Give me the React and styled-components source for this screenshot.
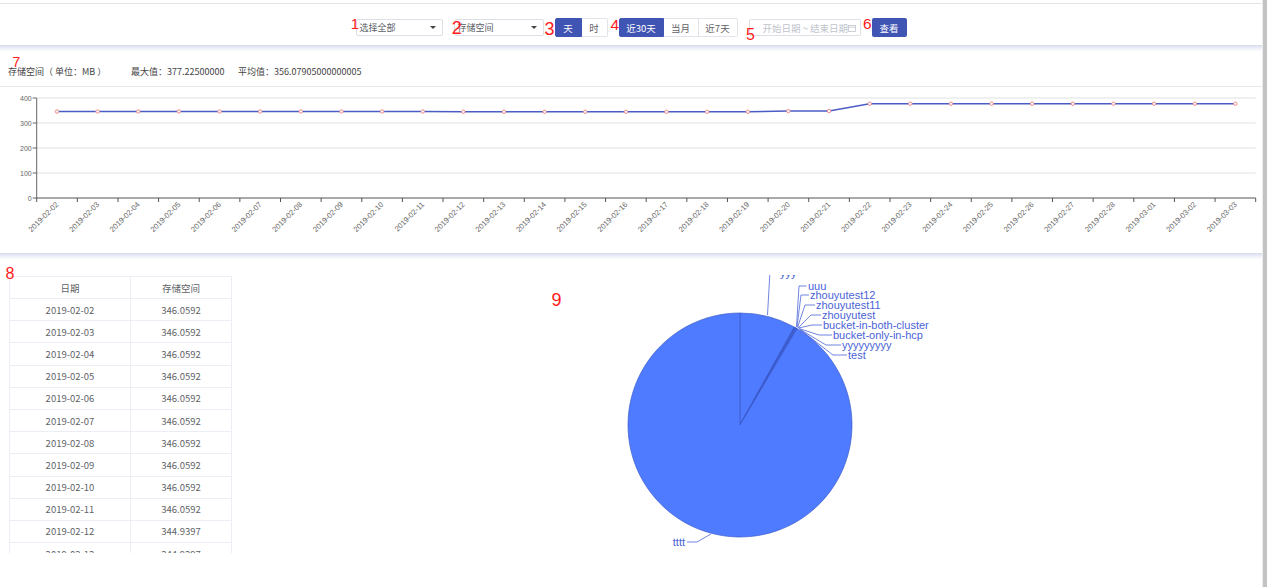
import React from "react";
import styled, { createGlobalStyle } from "styled-components";

const GlobalStyle = createGlobalStyle`
  html, body { margin: 0; padding: 0; background: #fff; overflow: hidden; }
  body { font-family: "Noto Sans CJK SC", "Noto Sans", sans-serif; }
  * { box-sizing: border-box; }
`;

const BLUE = "#4054b4";

const Page = styled.div`
  position: relative;
  display: flex;
  width: 1267px;
  height: 587px;
  overflow: hidden;
`;

const Main = styled.div`
  width: 1262px;
  display: flex;
  flex-direction: column;
`;

const Scrollbar = styled.div`
  width: 5px;
  height: 100%;
  background: #c3c3c3;
  border-left: 1px solid #ececec;
`;

const TopRule = styled.div`
  height: 4px;
  border-bottom: 1px solid #e4e4e4;
`;

const Toolbar = styled.div`
  height: 41px;
  padding-top: 14px;
  display: flex;
  align-items: flex-start;
  justify-content: center;
  gap: 11px;
`;

const Select = styled.div`
  width: ${(p) => p.$w}px;
  height: 17px;
  margin-top: 1px;
  border: 1px solid #dcdfe6;
  border-radius: 2px;
  background: #fff;
  display: flex;
  align-items: center;
  justify-content: space-between;
  padding: 0 6px 0 3px;
  font-size: 9px;
  color: #5a5e66;
`;

const Caret = styled.span`
  width: 0;
  height: 0;
  border-left: 3px solid transparent;
  border-right: 3px solid transparent;
  border-top: 3.5px solid #444;
`;

const SegGroup = styled.div`
  display: flex;
  height: 19px;
`;

const SegButton = styled.div`
  width: ${(p) => p.$w}px;
  height: 19px;
  display: flex;
  align-items: center;
  justify-content: center;
  font-size: 9.5px;
  background: ${(p) => (p.$active ? BLUE : "#fff")};
  color: ${(p) => (p.$active ? "#fff" : "#606266")};
  border: 1px solid ${(p) => (p.$active ? BLUE : "#e2e4ea")};
  border-left-width: ${(p) => (p.$first ? 1 : 0)}px;
  border-radius: ${(p) => (p.$first ? "2px 0 0 2px" : p.$last ? "0 2px 2px 0" : "0")};
`;

const DateRange = styled.div`
  position: relative;
  width: 112px;
  height: 17px;
  margin-top: 1px;
  border: 1px solid #dcdfe6;
  border-radius: 2px;
  padding-left: 13px;
  display: flex;
  align-items: center;
  font-size: 9.5px;
  color: #c0c4cc;
  white-space: nowrap;
  overflow: hidden;
`;

const CalIcon = styled.svg`
  position: absolute;
  right: 4px;
  top: 4px;
`;

const PrimaryButton = styled.div`
  width: 35px;
  height: 19px;
  background: ${BLUE};
  color: #fff;
  border-radius: 2px;
  font-size: 9.5px;
  display: flex;
  align-items: center;
  justify-content: center;
`;

const Shade = styled.div`
  height: 7px;
  background: linear-gradient(#d7dcec, #f3f5fb 60%, #fff);
`;

const ChartHeader = styled.div`
  height: 35px;
  border-bottom: 1px solid #e8e8e8;
  padding: 4px 0 0 8px;
  display: grid;
  grid-template-columns: 123px 107px auto;
  align-items: center;
  font-size: 9px;
  color: #444;
`;

const ChartSvg = styled.svg`
  display: block;
  width: 1262px;
  height: 166px;
`;

const Bottom = styled.div`
  display: flex;
  align-items: flex-start;
  flex: 1;
`;

const TableWrap = styled.div`
  margin: 16px 0 0 9px;
  width: 223px;
  height: 277px;
  overflow: hidden;
`;

const Table = styled.table`
  width: 222px;
  border-collapse: collapse;
  table-layout: fixed;
  font-size: 9.5px;
  color: #606266;
`;

const Th = styled.th`
  height: 22px;
  font-weight: normal;
  border: 1px solid #ebeef5;
  padding: 0;
  color: #606266;
  width: ${(p) => p.$w}px;
`;

const Td = styled.td`
  height: 22.2px;
  border: 1px solid #ebeef5;
  padding: 0;
  text-align: center;
`;

const PieSvg = styled.svg`
  display: block;
  margin: 15px 0 0 8px;
  width: 1022px;
  height: 312px;
`;

const Marker = styled.div`
  position: absolute;
  left: ${(p) => p.$x}px;
  top: ${(p) => p.$y}px;
  font-family: "Liberation Sans", Arial, sans-serif;
  font-size: ${(p) => p.$size}px;
  line-height: 1;
  color: #ff1a1a;
  pointer-events: none;
`;

/* ---------- data ---------- */
const dates = [];
for (let d = 2; d <= 28; d++) dates.push(`2019-02-${String(d).padStart(2, "0")}`);
for (let d = 1; d <= 3; d++) dates.push(`2019-03-0${d}`);
const values = dates.map((_, i) =>
  i < 10 ? 346.0592 : i < 18 ? 344.9397 : i < 20 ? 347.6 : 377.225
);

const tableRows = [
  ["2019-02-02", "346.0592"],
  ["2019-02-03", "346.0592"],
  ["2019-02-04", "346.0592"],
  ["2019-02-05", "346.0592"],
  ["2019-02-06", "346.0592"],
  ["2019-02-07", "346.0592"],
  ["2019-02-08", "346.0592"],
  ["2019-02-09", "346.0592"],
  ["2019-02-10", "346.0592"],
  ["2019-02-11", "346.0592"],
  ["2019-02-12", "344.9397"],
  ["2019-02-13", "344.9397"],
];

const AX0 = 36.7;
const AX1 = 1255.7;
const STEP = (AX1 - AX0) / 30;
const Y0 = 198;
const px = (i) => AX0 + STEP * (i + 0.5);
const py = (v) => Y0 - v * 0.25;

function LineChart() {
  const grid = [0, 100, 200, 300, 400];
  const linePts = values.map((v, i) => `${px(i).toFixed(1)},${py(v).toFixed(1)}`).join(" ");
  return (
    <ChartSvg viewBox="0 87 1262 166">
      {grid.map((g) => (
        <g key={g}>
          {g > 0 && (
            <line x1={AX0} x2={AX1} y1={Y0 - g * 0.25} y2={Y0 - g * 0.25} stroke="#ebebeb" strokeWidth="1.4" />
          )}
          <line x1={AX0 - 4} x2={AX0} y1={Y0 - g * 0.25} y2={Y0 - g * 0.25} stroke="#666" strokeWidth="1" />
          <text
            x={AX0 - 5}
            y={Y0 - g * 0.25 + 2.5}
            textAnchor="end"
            fontSize="7"
            fill="#666"
            fontFamily="Liberation Sans, Arial, sans-serif"
          >
            {g}
          </text>
        </g>
      ))}
      <line x1={AX0} x2={AX0} y1={98} y2={Y0} stroke="#666" strokeWidth="1" />
      <line x1={AX0} x2={AX1} y1={Y0} y2={Y0} stroke="#555" strokeWidth="1" />
      {Array.from({ length: 31 }).map((_, i) => (
        <line key={i} x1={AX0 + STEP * i} x2={AX0 + STEP * i} y1={Y0} y2={Y0 + 4} stroke="#555" strokeWidth="1" />
      ))}
      {dates.map((d, i) => (
        <text
          key={d}
          x={px(i) + 2}
          y={Y0 + 7}
          textAnchor="end"
          fontSize="7.6"
          fill="#666"
          fontFamily="Liberation Sans, Arial, sans-serif"
          transform={`rotate(-45 ${px(i) + 2} ${Y0 + 7})`}
        >
          {d}
        </text>
      ))}
      <polyline points={linePts} fill="none" stroke="#4a5dc6" strokeWidth="1.5" />
      {values.map((v, i) => (
        <circle key={i} cx={px(i)} cy={py(v)} r="1.7" fill="#fff" stroke="#ef8a8a" strokeWidth="1" />
      ))}
    </ChartSvg>
  );
}

const CX = 740;
const CY = 425;
const R = 112;
const pt = (deg) => {
  const a = (deg * Math.PI) / 180;
  return [CX + R * Math.sin(a), CY - R * Math.cos(a)];
};
const slicePath = (a0, a1) => {
  const [x0, y0] = pt(a0);
  const [x1, y1] = pt(a1);
  const large = a1 - a0 > 180 ? 1 : 0;
  return `M${CX},${CY} L${x0.toFixed(2)},${y0.toFixed(2)} A${R},${R} 0 ${large} 1 ${x1.toFixed(2)},${y1.toFixed(2)} Z`;
};

const slices = [
  [0, 29],
  [29, 29.2],
  [29.2, 29.4],
  [29.4, 29.6],
  [29.6, 29.8],
  [29.8, 30.0],
  [30.0, 30.2],
  [30.2, 30.4],
  [30.4, 30.6],
  [30.6, 360],
];

const labels = [
  { name: "yyy", pts: [[767.5, 315], [770, 271], [779, 271]], tx: 780, ly: 273.5 },
  { name: "uuu", pts: [[796.5, 327], [799, 286], [806.5, 286]], tx: 808, ly: 286 },
  { name: "zhouyutest12", pts: [[797, 327], [801, 295], [809, 295]], tx: 810, ly: 295 },
  { name: "zhouyutest11", pts: [[797.5, 327.5], [805, 305], [815, 305]], tx: 816, ly: 305 },
  { name: "zhouyutest", pts: [[798, 328], [811, 315], [821, 315]], tx: 822, ly: 315 },
  { name: "bucket-in-both-cluster", pts: [[798.5, 328], [812, 325], [822, 325]], tx: 823, ly: 325 },
  { name: "bucket-only-in-hcp", pts: [[799, 328.5], [819, 335], [832, 335]], tx: 833, ly: 335 },
  { name: "yyyyyyyyy", pts: [[799.5, 329], [826, 345], [841, 345]], tx: 842, ly: 345 },
  { name: "test", pts: [[800, 329.5], [833, 355], [847, 355]], tx: 848, ly: 355 },
];

function PieChart() {
  return (
    <PieSvg viewBox="240 275 1022 312">
      {slices.map(([a0, a1], i) => (
        <path key={i} d={slicePath(a0, a1)} fill="#4e7bff" stroke="#3d5ccb" strokeWidth="0.7" />
      ))}
      {labels.map((l) => (
        <g key={l.name}>
          <polyline points={l.pts.map((p) => p.join(",")).join(" ")} fill="none" stroke="#4d66d8" strokeWidth="0.8" />
          <text x={l.tx} y={l.ly + 3.5} fontSize="11" fill="#4a63d6" fontFamily="Liberation Sans, Arial, sans-serif">
            {l.name}
          </text>
        </g>
      ))}
      <polyline points="711,534 697,542 687,542" fill="none" stroke="#4d66d8" strokeWidth="0.8" />
      <text x="685" y="545.5" textAnchor="end" fontSize="11" fill="#4a63d6" fontFamily="Liberation Sans, Arial, sans-serif">
        tttt
      </text>
    </PieSvg>
  );
}

const markers = [
  { n: "1", x: 350.7, y: 16.3, s: 15 },
  { n: "2", x: 451.8, y: 19.3, s: 18 },
  { n: "3", x: 544.5, y: 20.3, s: 18 },
  { n: "4", x: 610.5, y: 17, s: 15.5 },
  { n: "5", x: 746, y: 27.2, s: 16 },
  { n: "6", x: 863, y: 16.3, s: 15.5 },
  { n: "7", x: 12.3, y: 54.9, s: 14.5 },
  { n: "8", x: 5.5, y: 265.6, s: 16 },
  { n: "9", x: 551.5, y: 290.7, s: 18 },
];

export default function App() {
  return (
    <>
      <GlobalStyle />
      <Page>
        <Main>
          <TopRule />
          <Toolbar>
            <Select $w={87}>
              <span>选择全部</span>
              <Caret />
            </Select>
            <Select $w={90}>
              <span>存储空间</span>
              <Caret />
            </Select>
            <SegGroup>
              <SegButton $w={27} $active $first>天</SegButton>
              <SegButton $w={26} $last>时</SegButton>
            </SegGroup>
            <SegGroup>
              <SegButton $w={45} $active $first>近30天</SegButton>
              <SegButton $w={35}>当月</SegButton>
              <SegButton $w={39} $last>近7天</SegButton>
            </SegGroup>
            <DateRange>
              开始日期 ~ 结束日期
              <CalIcon width="8" height="8" viewBox="0 0 8 8">
                <rect x="0.5" y="1.5" width="7" height="6" fill="#fff" stroke="#c0c4cc" strokeWidth="0.8" />
                <line x1="0.5" y1="3.2" x2="7.5" y2="3.2" stroke="#c0c4cc" strokeWidth="0.8" />
              </CalIcon>
            </DateRange>
            <PrimaryButton>查看</PrimaryButton>
          </Toolbar>
          <Shade />
          <ChartHeader>
            <span>存储空间（ 单位：MB ）</span>
            <span>最大值：377.22500000</span>
            <span>平均值：356.07905000000005</span>
          </ChartHeader>
          <LineChart />
          <Shade />
          <Bottom>
            <TableWrap>
              <Table>
                <thead>
                  <tr>
                    <Th $w={121}>日期</Th>
                    <Th $w={101}>存储空间</Th>
                  </tr>
                </thead>
                <tbody>
                  {tableRows.map(([d, v]) => (
                    <tr key={d}>
                      <Td>{d}</Td>
                      <Td>{v}</Td>
                    </tr>
                  ))}
                </tbody>
              </Table>
            </TableWrap>
            <PieChart />
          </Bottom>
        </Main>
        <Scrollbar />
        {markers.map((m) => (
          <Marker key={m.n} $x={m.x} $y={m.y} $size={m.s}>
            {m.n}
          </Marker>
        ))}
      </Page>
    </>
  );
}
